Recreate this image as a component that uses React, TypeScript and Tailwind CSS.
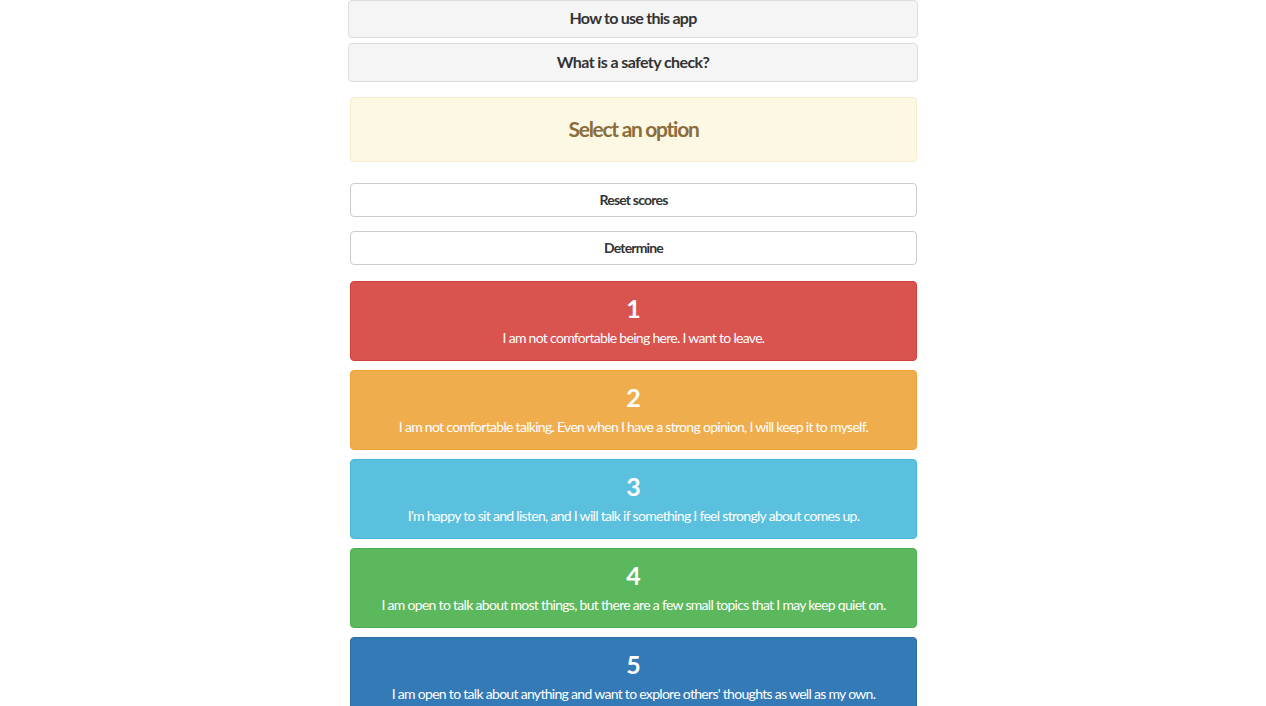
const font = { fontFamily: 'Lato, "Liberation Sans", sans-serif' }

const options = [
  { n: '1', text: 'I am not comfortable being here. I want to leave.', cls: 'bg-[#d9534f] border-[#d43f3a]' },
  { n: '2', text: 'I am not comfortable talking. Even when I have a strong opinion, I will keep it to myself.', cls: 'bg-[#f0ad4e] border-[#eea236]' },
  { n: '3', text: "I'm happy to sit and listen, and I will talk if something I feel strongly about comes up.", cls: 'bg-[#5bc0de] border-[#46b8da]' },
  { n: '4', text: 'I am open to talk about most things, but there are a few small topics that I may keep quiet on.', cls: 'bg-[#5cb85c] border-[#4cae4c]' },
  { n: '5', text: "I am open to talk about anything and want to explore others' thoughts as well as my own.", cls: 'bg-[#337ab7] border-[#2e6da4]' },
]

export default function App() {
  return (
    <div className="min-h-screen bg-white" style={font}>
      <div className="mx-auto w-[570px]">
        {/* Info panels */}
        <div className="flex flex-col gap-[5px]">
          <div className="h-[38px] pb-[2px] flex items-center justify-center bg-[#f5f5f5] border border-[#ddd] rounded text-[16px] font-bold tracking-[-0.75px] text-[#333]">
            How to use this app
          </div>
          <div className="h-[39px] pb-[2px] flex items-center justify-center bg-[#f5f5f5] border border-[#ddd] rounded text-[16px] font-bold tracking-[-0.6px] text-[#333]">
            What is a safety check?
          </div>
        </div>

        <div className="ml-[2px] w-[567px]">
          <div className="mt-[15px] h-[65px] pb-[2px] flex items-center justify-center bg-[#fcf8e3] border border-[#faebcc] rounded text-[21px] font-bold tracking-[-1.3px] text-[#8a6d3b]">
            Select an option
          </div>

          <button className="mt-[21px] w-full h-[34px] pb-[2px] bg-white border border-[#ccc] rounded text-[14px] font-bold tracking-[-0.8px] text-[#333]">
            Reset scores
          </button>
          <button className="mt-[14px] w-full h-[34px] pb-[2px] bg-white border border-[#ccc] rounded text-[14px] font-bold tracking-[-0.85px] text-[#333]">
            Determine
          </button>

          <div className="mt-[16px] flex flex-col gap-[9px]">
            {options.map(o => (
              <div key={o.n} className={`h-[80px] pb-[2px] border rounded flex flex-col items-center justify-center text-white ${o.cls}`}>
                <div className="text-[25px] font-bold leading-[30px]">{o.n}</div>
                <div className="text-[14px] leading-[20px] mt-[5px] tracking-[-0.7px] whitespace-nowrap">{o.text}</div>
              </div>
            ))}
          </div>
        </div>
      </div>
    </div>
  )
}
